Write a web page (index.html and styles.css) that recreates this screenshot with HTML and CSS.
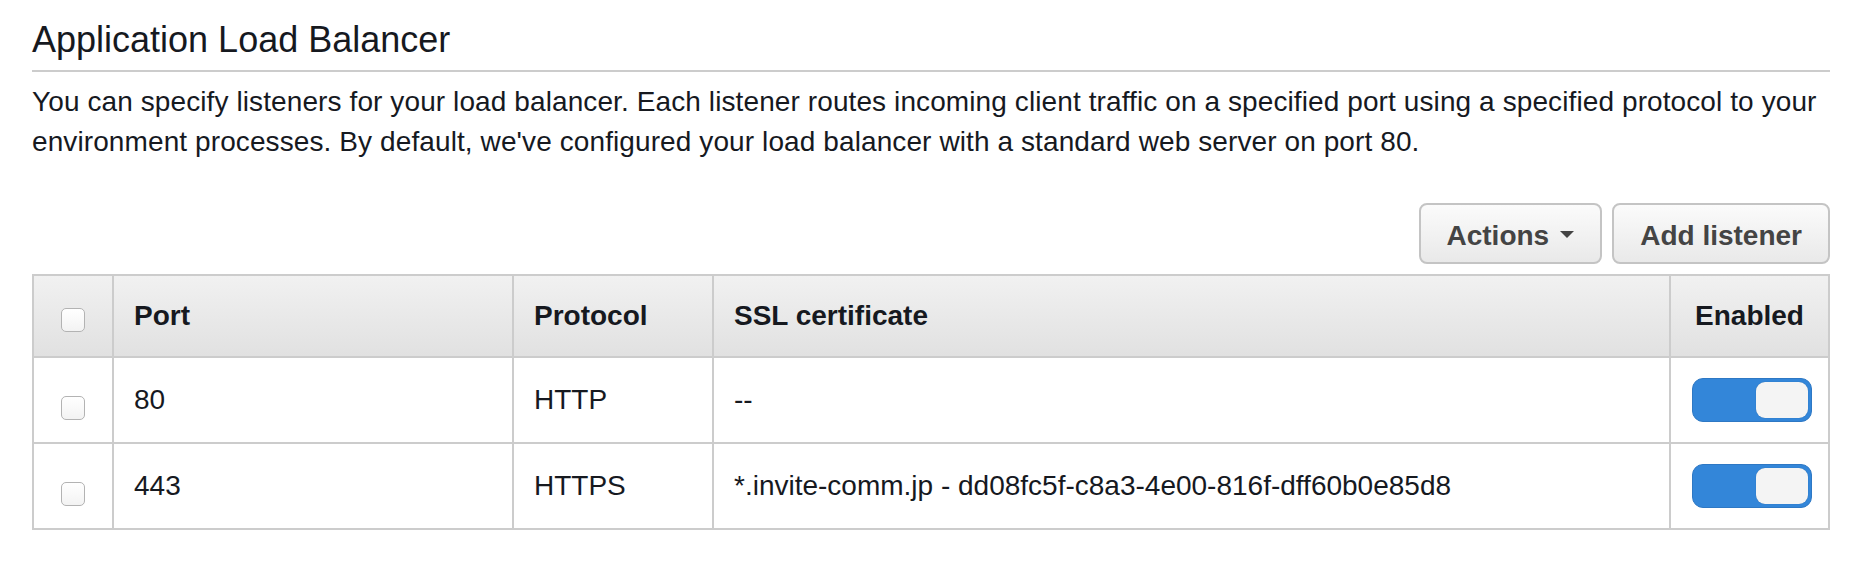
FILE: index.html
```html
<!DOCTYPE html>
<html lang="en">
<head>
<meta charset="utf-8">
<title>Application Load Balancer</title>
<link rel="stylesheet" href="styles.css">
</head>
<body>
<div class="page">
  <h2 class="title">Application Load Balancer</h2>
  <p class="intro">You can specify listeners for your load balancer. Each listener routes incoming client traffic on a specified port using a specified protocol to your environment processes. By default, we've configured your load balancer with a standard web server on port 80.</p>
  <div class="toolbar">
    <button class="btn">Actions <span class="caret"></span></button>
    <button class="btn">Add listener</button>
  </div>
  <table class="grid">
    <colgroup>
      <col class="c-check">
      <col class="c-port">
      <col class="c-proto">
      <col class="c-ssl">
      <col class="c-enabled">
    </colgroup>
    <thead>
      <tr>
        <th class="cell-check"><span class="checkbox"></span></th>
        <th>Port</th>
        <th>Protocol</th>
        <th>SSL certificate</th>
        <th class="cell-enabled">Enabled</th>
      </tr>
    </thead>
    <tbody>
      <tr>
        <td class="cell-check"><span class="checkbox"></span></td>
        <td>80</td>
        <td>HTTP</td>
        <td>--</td>
        <td class="cell-enabled"><span class="toggle"><span class="knob"></span></span></td>
      </tr>
      <tr>
        <td class="cell-check"><span class="checkbox"></span></td>
        <td>443</td>
        <td>HTTPS</td>
        <td>*.invite-comm.jp - dd08fc5f-c8a3-4e00-816f-dff60b0e85d8</td>
        <td class="cell-enabled"><span class="toggle"><span class="knob"></span></span></td>
      </tr>
    </tbody>
  </table>
</div>
</body>
</html>
```

FILE: styles.css
```css
html, body {
  margin: 0;
  padding: 0;
  background: #ffffff;
}

body {
  font-family: "Liberation Sans", Arial, Helvetica, sans-serif;
  color: #16191f;
}

.page {
  padding: 18px 32px 0 32px;
}

.title {
  margin: 0;
  font-size: 36px;
  line-height: 44px;
  font-weight: normal;
  color: #16191f;
  padding-bottom: 8px;
  border-bottom: 2px solid #cccccc;
}

.intro {
  margin: 10px 0 0 0;
  font-size: 28px;
  line-height: 40px;
  letter-spacing: 0.1px;
}

.toolbar {
  display: flex;
  justify-content: flex-end;
  gap: 10px;
  margin-top: 41px;
}

.btn {
  display: flex;
  align-items: center;
  gap: 11px;
  box-sizing: border-box;
  height: 61px;
  padding: 4px 26px 0 26px;
  font-family: "Liberation Sans", Arial, Helvetica, sans-serif;
  font-size: 28px;
  font-weight: bold;
  color: #444444;
  background: linear-gradient(#fbfbfb, #e9e9e9);
  border: 2px solid #c4c4c4;
  border-radius: 8px;
}

.caret {
  width: 0;
  height: 0;
  margin-top: -3px;
  border-left: 7px solid transparent;
  border-right: 7px solid transparent;
  border-top: 7px solid #444444;
}

.grid {
  margin-top: 10px;
  width: 100%;
  table-layout: fixed;
  border-collapse: collapse;
  border: 2px solid #cccccc;
  font-size: 28px;
  line-height: 40px;
}

.c-check { width: 80px; }
.c-port { width: 400px; }
.c-proto { width: 200px; }
.c-enabled { width: 159px; }

.grid th,
.grid td {
  border: 2px solid #cccccc;
  padding: 20px 20px;
  text-align: left;
  vertical-align: middle;
  white-space: nowrap;
}

.grid th {
  font-weight: bold;
  background: linear-gradient(#f1f1f1, #e1e1e1);
}

.grid .cell-check {
  text-align: center;
  padding: 0;
}

.grid .cell-enabled {
  text-align: center;
  padding: 20px 0;
}

.checkbox {
  display: inline-block;
  width: 22px;
  height: 22px;
  border: 1px solid #b3b3b3;
  border-radius: 5px;
  background: linear-gradient(#ffffff, #f3f3f3);
  vertical-align: middle;
  margin-top: 4px;
}

.grid td .checkbox {
  margin-top: 12px;
}

.toggle {
  display: inline-flex;
  justify-content: flex-end;
  align-items: center;
  box-sizing: border-box;
  width: 120px;
  height: 44px;
  padding: 0 3px;
  background: #3386d9;
  border: 1px solid #2e78c4;
  border-radius: 11px;
  vertical-align: middle;
  margin-left: 4px;
}

.knob {
  display: block;
  width: 52px;
  height: 36px;
  background: #f4f4f4;
  border-radius: 9px;
  box-shadow: 0 0 1px rgba(0, 0, 0, 0.25);
}
```
